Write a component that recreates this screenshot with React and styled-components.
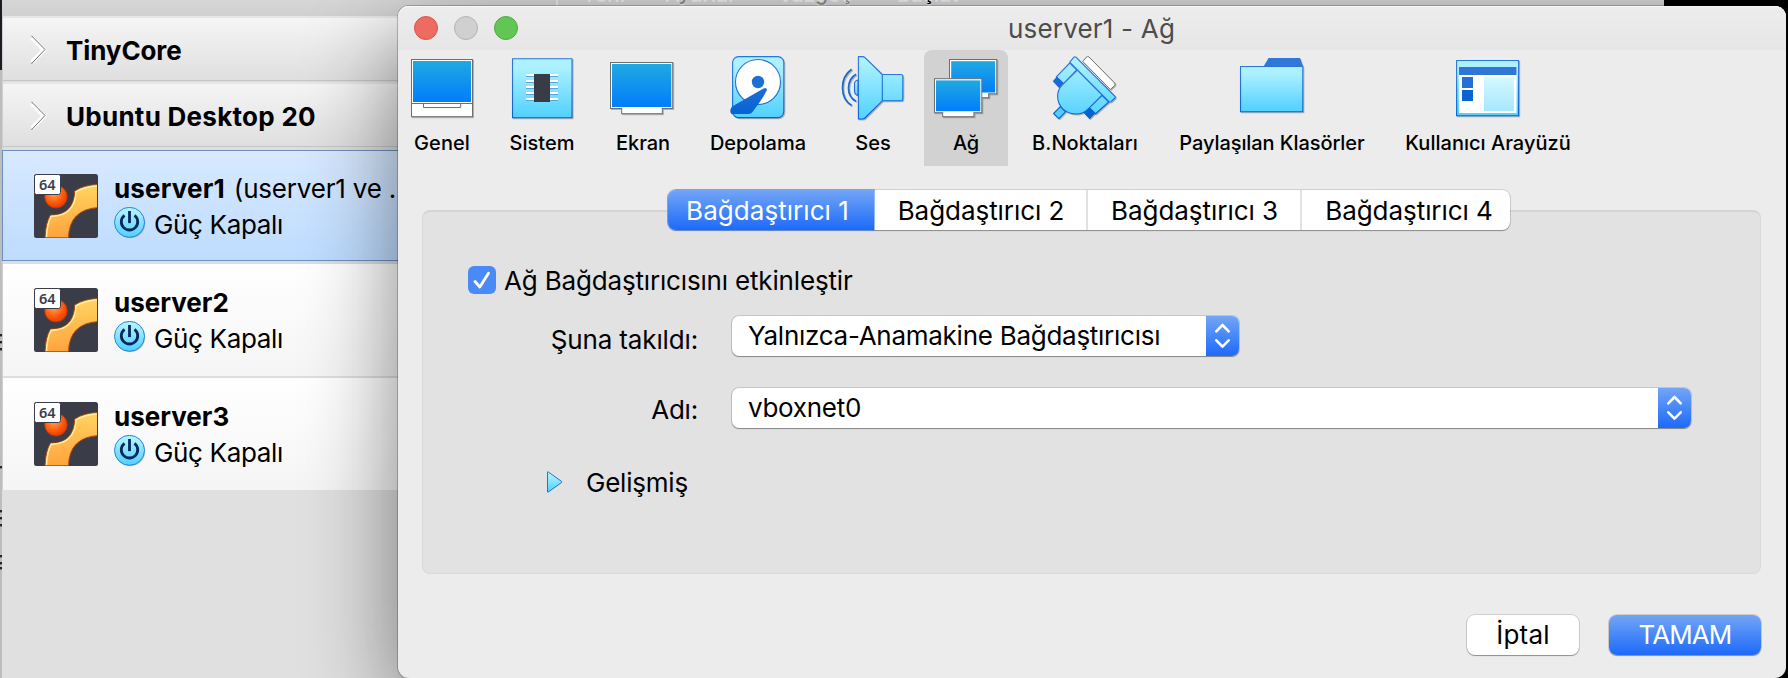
import React from 'react';
import styled, { createGlobalStyle, css } from 'styled-components';

const Global = createGlobalStyle`
  * { box-sizing: border-box; }
  body { margin: 0; background: #000; overflow: hidden; font-family: Inter, "Open Sans", sans-serif; }
`;

const blueFill = css`
  background: linear-gradient(#74a5f6, #4b8bf7 45%, #1e69f9);
  color: #fff;
`;

const Text = styled.span`
  white-space: pre;
  font-size: 26px;
  line-height: 36px;
  color: ${p => p.$color || '#000'};
  font-weight: ${p => p.$weight || 400};
  letter-spacing: ${p => p.$track || 0}px;
`;

const Screen = styled.div`
  position: relative;
  width: 1788px;
  height: 678px;
  overflow: hidden;
  background: #000;
  display: flex;
`;

const Edge = styled.svg`
  flex: none;
  width: 2px;
  height: 678px;
`;

const Manager = styled.div`
  width: 1662px;
  height: 678px;
  background: #e0e0e0;
`;

const ManagerBar = styled.div`
  height: 16px;
  background: linear-gradient(#d6d6d6, #d0d0d0);
  overflow: hidden;
  display: flex;
  align-items: flex-start;
  padding-left: 554px;
`;

const BarDivider = styled.i`
  width: 2px;
  height: 14px;
  background: rgba(255, 255, 255, 0.45);
  margin-right: 24px;
`;

const BarAction = styled.span`
  width: ${p => p.$w}px;
  margin-top: -21px;
  font-size: 21px;
  font-weight: 500;
  line-height: 28px;
  white-space: nowrap;
  color: ${p => (p.$on ? '#000' : '#8c8c8c')};
  text-shadow: 0 2px 0 rgba(255, 255, 255, 0.6);
`;

const Sidebar = styled.div`
  width: 440px;
  border-left: 1px solid #cfcfcf;
`;

const Group = styled.div`
  height: 66px;
  border-top: 2px solid #e6e6e6;
  border-bottom: 1px solid #dedede;
  background: linear-gradient(#f5f5f5, #dfdfdf 62px, #c6c6c6 62px, #c6c6c6);
  display: flex;
  align-items: center;
  padding: 3px 0 0 24px;
  gap: 15px;
`;

const VmList = styled.div`
  padding-top: 2px;
  background: #dedede;
`;

const Vm = styled.div`
  height: 112px;
  margin-bottom: ${p => (p.$last ? 0 : 2)}px;
  background: ${p => (p.$selected ? 'linear-gradient(#d7e9ff, #bedcff)' : 'linear-gradient(#fff, #f5f5f5)')};
  ${p => p.$selected && css`
    height: 111px;
    margin-bottom: 3px;
    margin-left: -1px;
    border: 1px solid #6c8fbd;
  `}
  display: flex;
  gap: 16px;
  align-items: flex-start;
  padding: ${p => (p.$selected ? 23 : 24)}px 0 0 31px;
`;

const VmText = styled.div`
  margin-top: -3px;
`;

const VmLine = styled.div`
  height: 36px;
  display: flex;
  gap: ${p => p.$gap || 0}px;
`;

const Dialog = styled.div`
  position: absolute;
  left: 398px;
  top: 6px;
  width: 1388px;
  height: 672px;
  border-radius: 11px;
  background: #ececec;
  box-shadow: 0 0 0 1px rgba(0, 0, 0, 0.22), 0 30px 92px rgba(0, 0, 0, 0.48);
`;

const TitleBar = styled.div`
  height: 44px;
  border-radius: 11px 11px 0 0;
  background: linear-gradient(#ededed, #e6e6e6);
  box-shadow: inset 0 1px 0 #f8f8f8;
  display: grid;
  grid-template-columns: 130px 1fr 131px;
  align-items: center;
`;

const Lights = styled.div`
  display: flex;
  gap: 16px;
  padding-left: 16px;
`;

const Light = styled.i`
  width: 24px;
  height: 24px;
  border-radius: 50%;
  background: ${p => p.$fill};
  border: 1px solid ${p => p.$edge};
`;

const Title = styled(Text)`
  justify-self: center;
  padding-top: 2px;
`;

const Toolbar = styled.div`
  height: 116px;
  display: flex;
  padding-left: 2px;
`;

const Tool = styled.div`
  width: ${p => p.$w}px;
  margin-left: ${p => p.$ml || 0}px;
  border-radius: 8px 8px 0 0;
  background: ${p => (p.$active ? '#d2d2d2' : 'transparent')};
  display: flex;
  flex-direction: column;
  align-items: center;
  padding-top: 6px;
`;

const ToolIcon = styled.svg`
  width: 64px;
  height: 64px;
  overflow: visible;
  filter: drop-shadow(1px 1px 0 rgba(0, 0, 0, 0.25));
`;

const ToolLabel = styled(Text)`
  font-size: 20px;
  line-height: 28px;
  margin-top: 9px;
`;

const Body = styled.div`
  padding: 24px 25px 0 24px;
`;

const Tabs = styled.div`
  position: relative;
  z-index: 1;
  width: 842px;
  height: 40px;
  margin-left: 246px;
  display: flex;
  border-radius: 8px;
  background: #fff;
  box-shadow: 0 0 0 1px rgba(0, 0, 0, 0.12), 0 1px 1px rgba(0, 0, 0, 0.3);
`;

const Tab = styled.div`
  width: ${p => p.$w}px;
  padding: 2px ${p => p.$pr || 0}px 0 ${p => p.$pl || 0}px;
  display: flex;
  align-items: center;
  justify-content: center;
  border-left: ${p => (p.$line ? '2px solid #e2e2e2' : 'none')};
  border-radius: ${p => (p.$active ? '8px 0 0 8px' : '0')};
  ${p => p.$active && blueFill}
  ${p => p.$active && 'box-shadow: 0 0 0 1px rgba(60, 130, 240, 0.55);'}
`;

const Panel = styled.div`
  margin-top: -20px;
  height: 364px;
  border: 1px solid #d9d9d9;
  border-top: 2px solid #d4d4d4;
  border-radius: 8px;
  background: #e2e2e2;
  padding: 54px 0 0 45px;
`;

const CheckRow = styled.div`
  height: 28px;
  display: flex;
  align-items: center;
  gap: 8px;
`;

const CheckLabel = styled(Text)`
  padding-top: 2px;
`;

const Check = styled.i`
  width: 28px;
  height: 28px;
  border-radius: 6px;
  background: #4a8af6;
  display: flex;
`;

const Field = styled.div`
  height: 40px;
  margin-top: ${p => p.$mt}px;
  display: flex;
  gap: 34px;
`;

const FieldLabel = styled.div`
  width: 230px;
  height: 40px;
  padding-top: ${p => p.$drop}px;
  text-align: right;
`;

const Select = styled.div`
  width: ${p => p.$w}px;
  height: 40px;
  border-radius: 7px;
  background: #fff;
  box-shadow: 0 0 0 1px rgba(0, 0, 0, 0.12), 0 1px 1px rgba(0, 0, 0, 0.32);
  display: flex;
  justify-content: space-between;
  padding-left: 16px;
`;

const SelectText = styled(Text)`
  padding-top: 2px;
  height: 40px;
`;

const Stepper = styled.div`
  ${blueFill}
  width: 33px;
  border-radius: 0 7px 7px 0;
  display: flex;
  align-items: center;
  justify-content: center;
`;

const Advanced = styled.div`
  height: 40px;
  margin-top: 34px;
  padding-left: 78px;
  display: flex;
  align-items: center;
  gap: 23px;
`;

const AdvancedLabel = styled(Text)`
  padding-top: 2px;
`;

const Footer = styled.div`
  margin-top: 41px;
  display: flex;
  justify-content: flex-end;
  gap: 30px;
`;

const Button = styled.div`
  width: ${p => p.$w}px;
  height: 40px;
  border-radius: 8px;
  background: #fff;
  display: flex;
  align-items: center;
  justify-content: center;
  box-shadow: 0 0 0 1px rgba(0, 0, 0, 0.13), 0 1px 1px rgba(0, 0, 0, 0.3);
  ${p => p.$primary && blueFill}
`;

const Defs = styled.svg`
  position: absolute;
  width: 0;
  height: 0;
`;

const Gradients = () => (
  <Defs>
    <defs>
      <linearGradient id="screen" x1="0" y1="0" x2="0" y2="1"><stop offset="0" stopColor="#21a9e1" /><stop offset="1" stopColor="#007dfb" /></linearGradient>
      <linearGradient id="sky" x1="0" y1="0" x2="0" y2="1"><stop offset="0.15" stopColor="#abf1ff" /><stop offset="1" stopColor="#50d0ff" /></linearGradient>
      <linearGradient id="skyPlug" gradientUnits="userSpaceOnUse" x1="0" y1="0" x2="0" y2="64"><stop offset="0.1" stopColor="#abf1ff" /><stop offset="1" stopColor="#50d0ff" /></linearGradient>
      <linearGradient id="edge" gradientUnits="userSpaceOnUse" x1="0" y1="0" x2="0" y2="64"><stop offset="0.3" stopColor="#2b74d8" /><stop offset="1" stopColor="#0060d2" /></linearGradient>
      <linearGradient id="pale" x1="0" y1="0" x2="0" y2="1"><stop offset="0" stopColor="#d5f8ff" /><stop offset="1" stopColor="#a7e7ff" /></linearGradient>
      <linearGradient id="horn" x1="0.2" y1="0" x2="0.3" y2="1"><stop offset="0" stopColor="#ffd964" /><stop offset="1" stopColor="#ffa23c" /></linearGradient>
      <radialGradient id="ball" cx="0.4" cy="0.35" r="0.65"><stop offset="0" stopColor="#ffa166" /><stop offset="0.55" stopColor="#ff6410" /><stop offset="1" stopColor="#e63c00" /></radialGradient>
      <clipPath id="tile"><rect width="63" height="63.5" rx="2.5" /></clipPath>
    </defs>
  </Defs>
);

const frame = { fill: '#fff', stroke: '#6e6e6e', strokeWidth: 1 };
const blueLine = { stroke: 'url(#edge)', strokeWidth: 1.1, strokeLinejoin: 'round' };

const icons = {
  general: <>
    <rect x="1.5" y="3.5" width="61" height="57.2" {...frame} />
    <rect x="3" y="5" width="58" height="41" fill="url(#screen)" />
    <path d="M1.5 47.5H62.5M13.5 47.5V51.5H50.7V47.5" {...frame} fill="none" />
  </>,
  system: <>
    <rect x="2.5" y="2.7" width="59.5" height="59" fill="url(#sky)" {...blueLine} />
    {[18, 24, 30, 36, 42].map(y => <g key={y}>
      <rect x="16" y={y} width="32" height="2" fill="#fff" />
      <rect x="16" y={y + 2} width="32" height="1" fill="#5ba7dc" />
    </g>)}
    <rect x="24" y="18" width="16" height="28" fill="#383c47" />
  </>,
  display: <g transform="translate(-1 0)">
    <rect x="11.7" y="52.7" width="40.6" height="5" {...frame} />
    <rect x="0.5" y="6.5" width="62.2" height="46" {...frame} />
    <rect x="2" y="8" width="59.3" height="43" fill="url(#screen)" />
    <rect x="12.3" y="52" width="39.4" height="2" fill="#fff" />
  </g>,
  storage: <>
    <rect x="6.6" y="0.6" width="51.2" height="61" rx="6" fill="url(#sky)" {...blueLine} />
    <circle cx="32" cy="26" r="22.5" fill="#fff" {...blueLine} />
    <circle cx="32" cy="26" r="6.2" fill="#1e6fd4" />
    <path d="M37.5 32.6Q40.5 31 41 34Q36 44 26.5 56Q25.5 58 22 58H6.5Q4.3 58 4.3 54.5Q4.3 51.5 7 50Z" fill="url(#edge)" />
  </>,
  audio: <>
    <path d="M17 24Q13.5 24.5 13.5 28V35Q13.5 38.5 17 39.5Z" fill="url(#sky)" {...blueLine} />
    <path d="M17.4 0.6H21.5Q23 0.6 24 1.6L41.3 18.5H60Q61.8 18.5 61.8 20.3V43Q61.8 44.8 60 44.8H41.3L24 62Q23 63 21.5 63H17.4Z" fill="url(#skyPlug)" {...blueLine} />
    <path d="M41.3 18.5V44.8" fill="none" {...blueLine} />
    <path d="M15 18.2C5 24 5 40 15 45.2M10.6 13.3C-1.5 22 -1.5 41.5 10.6 49.5" fill="none" stroke="#1669d2" strokeWidth="1.7" />
  </>,
  network: <>
    <rect x="45" y="37.7" width="9.7" height="4" {...frame} />
    <rect x="15.5" y="3.5" width="47.3" height="34.3" {...frame} />
    <rect x="17.2" y="5.2" width="44" height="31.3" fill="url(#screen)" />
    <rect x="46" y="37" width="8" height="2" fill="#fff" />
    <rect x="8.7" y="56.5" width="31.2" height="4.2" {...frame} />
    <rect x="0.5" y="22.7" width="47.3" height="34" {...frame} />
    <rect x="2" y="24.4" width="44.3" height="30.8" fill="url(#screen)" />
    <rect x="9.3" y="56" width="30" height="2" fill="#fff" />
  </>,
  ports: <g transform="translate(-0.7 0)">
    <path d="M30.5 5.5L34.2 1Q35.5 0.2 36.7 1L62.3 27Q63.3 28.3 62.3 29.5L58 33.5Z" {...frame} />
    <path d="M8.2 50.5L13.2 55.8L6.5 62.7L1.3 57.5Z" fill="#4fd0ff" {...blueLine} />
    <path d="M17.5 7L24.5 14L11 28L4 20.8Z" fill="url(#skyPlug)" {...blueLine} />
    <path d="M4.6 20.4L12 27.5L6.8 32L0.4 25.3Z" fill="#1c6bd4" />
    <path d="M49.5 39L56.5 46L43 58L36 51.5Z" fill="url(#skyPlug)" {...blueLine} />
    <path d="M36.5 50.5L43.3 57L37.3 63.2L30.5 56Z" fill="#0562d3" />
    <path d="M25 14L10 28.8Q5.3 33.5 5.3 40Q5.3 48 11 53.3Q16.5 58 24 58Q31 57.8 36 52.8L50 39Z" fill="url(#skyPlug)" {...blueLine} />
    <path d="M17.4 6.2L21.7 1.2Q22.6 0.3 23.6 1.2L62.7 40.4Q63.4 41.2 62.7 42L58.8 45.6Q57.7 46.3 56.6 45.6Z" fill="url(#skyPlug)" {...blueLine} />
  </g>,
  folders: <>
    <path d="M23.5 10.5L28.6 2H60L63 10.5Z" fill="#2f77d8" />
    <rect x="0.5" y="10.5" width="62.3" height="45.2" fill="url(#sky)" {...blueLine} />
  </>,
  ui: <>
    <rect x="0.6" y="4.5" width="62" height="55.2" fill="url(#sky)" {...blueLine} />
    <rect x="3" y="11" width="57.5" height="46" fill="#fff" />
    <rect x="3" y="11" width="57.5" height="8" fill="#2f76d6" />
    <rect x="6" y="21" width="11" height="11" fill="#2470d5" />
    <rect x="6" y="34" width="11" height="11" fill="#0864d3" />
    <rect x="28" y="21" width="30" height="34" fill="url(#pale)" />
  </>,
};

const tools = [
  { icon: 'general', label: 'Genel', w: 84, track: 0.1 },
  { icon: 'system', label: 'Sistem', w: 116, track: 0 },
  { icon: 'display', label: 'Ekran', w: 86, track: -0.1 },
  { icon: 'storage', label: 'Depolama', w: 144, track: 0 },
  { icon: 'audio', label: 'Ses', w: 86, track: 0 },
  { icon: 'network', label: 'Ağ', w: 84, ml: 8, active: true, track: -0.2 },
  { icon: 'ports', label: 'B.Noktaları', w: 154, track: 0.05 },
  { icon: 'folders', label: 'Paylaşılan Klasörler', w: 220, track: -0.08 },
  { icon: 'ui', label: 'Kullanıcı Arayüzü', w: 212, track: 0.02 },
];

const tabs = [
  { label: 'Bağdaştırıcı 1', w: 206, active: true, pr: 7, track: 0.05 },
  { label: 'Bağdaştırıcı 2', w: 212, pl: 2, track: -0.05 },
  { label: 'Bağdaştırıcı 3', w: 214, line: true, pl: 1, track: -0.05 },
  { label: 'Bağdaştırıcı 4', w: 210, line: true, pl: 6, track: -0.05 },
];

const GroupArrow = () => (
  <svg width="24" height="32" viewBox="0 0 24 32">
    <path d="M5 3L17 15L5 27" fill="none" stroke="#fff" strokeWidth="4.4" />
    <path d="M4.5 0.8L18 14.5L4.5 28.8" fill="none" stroke="#5c5c5c" strokeWidth="0.9" />
  </svg>
);

const OsIcon = () => (
  <svg width="64" height="64" viewBox="0 0 64 64">
    <rect width="64" height="64" rx="2.5" fill="#3a3d48" />
    <g clipPath="url(#tile)">
      <circle cx="22" cy="22.8" r="11.3" fill="url(#ball)" stroke="#c42e00" strokeWidth="0.8" />
      <path d="M11 64Q11.5 49 16.5 41C29 42 40.5 35 40.7 17Q50 11 65 10.5V33.5Q35 35 34.5 64Z" fill="url(#horn)" stroke="#b8480b" strokeWidth="1" />
      <path d="M12.5 63Q13 50 17.3 42.2C31 42.5 41.5 35 42 17.8Q51 12.4 64 12" fill="none" stroke="#fff0a8" strokeWidth="1.4" />
    </g>
    <rect x="0.5" y="0.5" width="26" height="20" rx="2" fill="#fff" stroke="#3a3d48" />
    <text x="5" y="16" fontFamily="Noto Sans" fontWeight="600" fontSize="14.5" fill="#3a3d48">64</text>
  </svg>
);

const PowerGlyph = styled.svg`
  flex: none;
  width: 32px;
  height: 32px;
`;

const PowerIcon = () => (
  <PowerGlyph viewBox="0 0 32 32">
    <circle cx="16.2" cy="16.2" r="15" fill="rgba(0,0,0,.25)" />
    <circle cx="15.5" cy="15.3" r="15" fill="url(#sky)" stroke="#2a86dc" />
    <path d="M10.5 8.3A8.2 8.2 0 1 0 20.5 8.3" fill="none" stroke="#06285f" strokeWidth="2.8" />
    <path d="M15.5 4V16.1" stroke="#06285f" strokeWidth="2.8" />
  </PowerGlyph>
);

const Arrows = () => (
  <svg width="17" height="26" viewBox="0 0 17 26" fill="none" stroke="#fff" strokeWidth="2.6" strokeLinecap="round" strokeLinejoin="round">
    <path d="M2.3 8.3L8.5 2L14.7 8.3M2.3 17.3L8.5 23.6L14.7 17.3" />
  </svg>
);

const vms = [
  { name: 'userver1', track: 0.15, snapshot: '(userver1 ve .', selected: true },
  { name: 'userver2', track: 0 },
  { name: 'userver3', track: 0 },
];

export default function App() {
  return (
    <>
      <Global />
      <Gradients />
      <Screen>
        <Edge viewBox="0 0 2 678">
          <rect width="2" height="678" fill="#bdbdbd" />
          <rect width="2" height="70" fill="#1b1c24" />
          {[334, 341, 348, 466, 510, 517, 524, 555, 562, 567].map(y => <rect key={y} y={y} width="2" height="2.4" fill="#26262a" />)}
        </Edge>
        <Manager>
          <ManagerBar>
            <BarDivider />
            <BarAction $w={83}>Yeni</BarAction>
            <BarAction $w={113}>Ayarlar</BarAction>
            <BarAction $w={119}>Vazgeç</BarAction>
            <BarAction $w={80} $on>Başlat</BarAction>
          </ManagerBar>
          <Sidebar>
            <Group><GroupArrow /><Text $weight={700} $track={-0.1}>TinyCore</Text></Group>
            <Group><GroupArrow /><Text $weight={700} $track={0.27}>Ubuntu Desktop 20</Text></Group>
            <VmList>
              {vms.map((vm, i) => (
                <Vm key={vm.name} $selected={vm.selected} $last={i === vms.length - 1}>
                  <OsIcon />
                  <VmText>
                    <VmLine $gap={9}>
                      <Text $weight={700} $track={vm.track}>{vm.name}</Text>
                      {vm.snapshot && <Text $track={-0.19}>{vm.snapshot}</Text>}
                    </VmLine>
                    <VmLine $gap={8}>
                      <PowerIcon />
                      <Text $track={-0.34}>Güç Kapalı</Text>
                    </VmLine>
                  </VmText>
                </Vm>
              ))}
            </VmList>
          </Sidebar>
        </Manager>
        <Dialog>
          <TitleBar>
            <Lights>
              <Light $fill="#ed6b60" $edge="#d9544a" />
              <Light $fill="#d0d0d0" $edge="#b4b4b4" />
              <Light $fill="#62c655" $edge="#4dab40" />
            </Lights>
            <Title $color="#4c4c4c" $track={0.2}>userver1 - Ağ</Title>
          </TitleBar>
          <Toolbar>
            {tools.map(t => (
              <Tool key={t.icon} $w={t.w} $ml={t.ml} $active={t.active}>
                <ToolIcon viewBox="0 0 64 64">{icons[t.icon]}</ToolIcon>
                <ToolLabel $weight={500} $track={t.track}>{t.label}</ToolLabel>
              </Tool>
            ))}
          </Toolbar>
          <Body>
            <Tabs>
              {tabs.map(t => (
                <Tab key={t.label} $w={t.w} $active={t.active} $line={t.line} $pr={t.pr} $pl={t.pl}>
                  <Text $color={t.active && '#fff'} $track={t.track}>{t.label}</Text>
                </Tab>
              ))}
            </Tabs>
            <Panel>
              <CheckRow>
                <Check>
                  <svg width="28" height="28" viewBox="0 0 28 28" fill="none" stroke="#fff" strokeWidth="2.8" strokeLinecap="round" strokeLinejoin="round">
                    <path d="M7 15.5L11.8 21L20.5 7.3" />
                  </svg>
                </Check>
                <CheckLabel $track={-0.17}>Ağ Bağdaştırıcısını etkinleştir</CheckLabel>
              </CheckRow>
              <Field $mt={22}>
                <FieldLabel $drop={6}><Text $track={-0.14}>Şuna takıldı:</Text></FieldLabel>
                <Select $w={507}>
                  <SelectText $track={-0.27}>Yalnızca-Anamakine Bağdaştırıcısı</SelectText>
                  <Stepper><Arrows /></Stepper>
                </Select>
              </Field>
              <Field $mt={32}>
                <FieldLabel $drop={4}><Text $track={-0.2}>Adı:</Text></FieldLabel>
                <Select $w={959}>
                  <SelectText $track={-0.27}>vboxnet0</SelectText>
                  <Stepper><Arrows /></Stepper>
                </Select>
              </Field>
              <Advanced>
                <svg width="17" height="22" viewBox="0 0 17 22">
                  <path d="M1.5 1.2Q1.5 0.5 2.3 1L15.6 10.4Q16 11 15.6 11.5L2.3 21Q1.5 21.4 1.5 20.8Z" fill="url(#sky)" stroke="#1b74d4" strokeWidth="1" />
                </svg>
                <AdvancedLabel $track={-0.22}>Gelişmiş</AdvancedLabel>
              </Advanced>
            </Panel>
            <Footer>
              <Button $w={112}><Text $track={0.22}>İptal</Text></Button>
              <Button $w={152} $primary><Text $color="#fff" $track={-0.9}>TAMAM</Text></Button>
            </Footer>
          </Body>
        </Dialog>
      </Screen>
    </>
  );
}
